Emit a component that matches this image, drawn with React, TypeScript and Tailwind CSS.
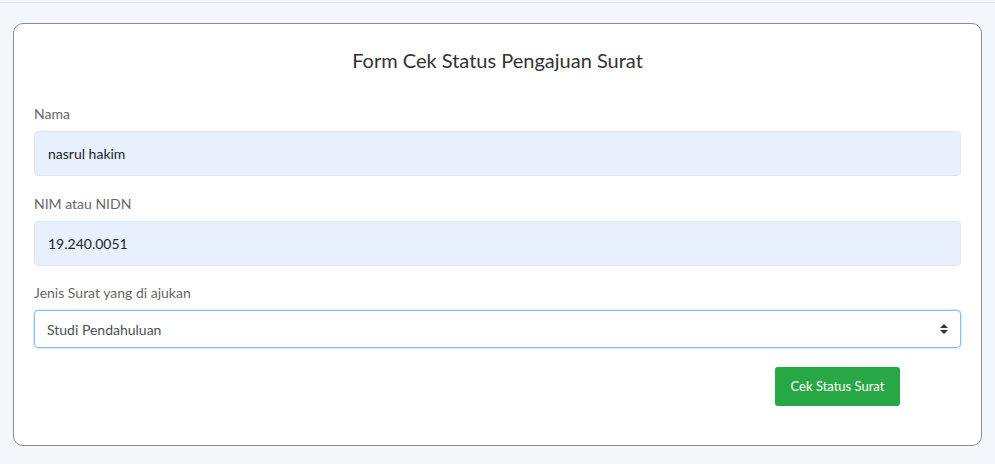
import { useState } from 'react'

export default function App(){
  const [form, setForm] = useState({ nama:'nasrul hakim', nim:'19.240.0051', jenis:'Studi Pendahuluan' })

  return (
    <div className="min-h-screen bg-[#f4f7fa] pt-[2px]" style={{ fontFamily: 'Lato, "Open Sans", sans-serif' }}>
      <div className="border-t border-[#dfe5ea] px-[13px] pt-5">
        <div className="rounded-[10px] border border-[#8c8c8c] bg-white px-5 pt-6 pb-[39px]">
          <h1 className="mb-[31px] text-center text-[20px] leading-6 text-[#333]">Form Cek Status Pengajuan Surat</h1>

          <label className="mb-[7px] block text-[14px] leading-[21px] text-[#666]">Nama</label>
          <input className="mb-[17px] block h-[45px] w-full rounded border border-[#e2e6ea] bg-[#e8f0fe] px-[13px] text-[14px] text-[#212529] outline-none" value={form.nama} onChange={e=>setForm({...form, nama:e.target.value})}/>

          <label className="mb-[7px] block text-[14px] leading-[21px] text-[#666]">NIM atau NIDN</label>
          <input className="mb-4 block h-[45px] w-full rounded border border-[#e2e6ea] bg-[#e8f0fe] px-[13px] text-[14px] text-[#212529] outline-none" value={form.nim} onChange={e=>setForm({...form, nim:e.target.value})}/>

          <label className="mb-[7px] block text-[14px] leading-[21px] text-[#666]">Jenis Surat yang di ajukan</label>
          <div className="relative">
            <select className="block h-[38px] w-full appearance-none rounded border border-[#80bdff] bg-white px-3 text-[14px] text-[#495057] shadow-[0_0_0_1px_rgba(128,189,255,0.25)] outline-none" value={form.jenis} onChange={e=>setForm({...form, jenis:e.target.value})}>
              <option>Studi Pendahuluan</option>
              <option>Izin Penelitian</option>
            </select>
            <svg className="pointer-events-none absolute right-[13px] top-[14px]" width="8" height="10" viewBox="0 0 8 10">
              <path d="M4 0 L8 4 H0 Z M0 6 H8 L4 10 Z" fill="#333"/>
            </svg>
          </div>

          <div className="mt-[19px] flex justify-end pr-[61px]">
            <button className="h-[39px] w-[125px] rounded-[3px] bg-[#28a745] text-[13px] text-white">Cek Status Surat</button>
          </div>
        </div>
      </div>
    </div>
  )
}
